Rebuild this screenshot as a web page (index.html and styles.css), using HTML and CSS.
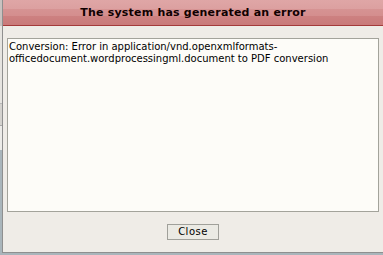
FILE: index.html
```html
<!DOCTYPE html>
<html>
<head>
<meta charset="utf-8">
<link rel="stylesheet" href="styles.css">
</head>
<body>
<div class="dialog">
  <div class="dialog-header">The system has generated an error</div>
  <div class="dialog-body">
    <div class="message">Conversion: Error in application/vnd.openxmlformats-officedocument.wordprocessingml.document to PDF conversion</div>
    <div class="actions">
      <button class="btn" type="button">Close</button>
    </div>
  </div>
</div>
</body>
</html>
```

FILE: styles.css
```css
html, body {
  margin: 0;
  padding: 0;
  width: 383px;
  height: 255px;
  overflow: hidden;
}
body {
  background:
    linear-gradient(to bottom,
      #c9c2c0 0, #c9c2c0 26px,
      #e6e4e0 26px, #e6e4e0 103px,
      #b8b8b8 103px, #b8b8b8 104px,
      #d4d2ce 104px, #d4d2ce 125px,
      #a8a8a8 125px, #a8a8a8 126px,
      #ecebe8 126px, #ecebe8 150px,
      #a9b5bb 150px, #a9b5bb 100%);
  font-family: "DejaVu Sans", Verdana, sans-serif;
}
.dialog {
  box-sizing: border-box;
  margin-left: 2px;
  width: 381px;
  height: 253px;
  background: #efece7;
  border-left: 1px solid #8f8f8f;
  border-bottom: 1px solid #8f8f8f;
  display: flex;
  flex-direction: column;
}
.dialog-header {
  height: 25px;
  border-bottom: 1px solid #a43a3a;
  background: linear-gradient(to bottom,
    #dfa6a6 0, #dca0a0 36%,
    #d69393 36%, #d48e8e 64%,
    #cd8181 64%, #c97a7a 100%);
  font-weight: bold;
  font-size: 11px;
  letter-spacing: 0.2px;
  line-height: 25px;
  color: #100000;
  text-align: center;
}
.dialog-body {
  padding: 12px 0 0 4px;
  display: flex;
  flex-direction: column;
  align-items: flex-start;
}
.message {
  box-sizing: border-box;
  width: 372px;
  height: 174px;
  background: #fdfcf8;
  border: 1px solid #a3a39b;
  padding: 2px 1px;
  font-size: 10px;
  line-height: 12px;
  color: #000;
}
.actions {
  width: 372px;
  display: flex;
  justify-content: center;
  padding-top: 12px;
}
.btn {
  box-sizing: border-box;
  width: 52px;
  height: 16px;
  margin: 0;
  padding: 0;
  background: #ebeae4;
  border: 1px solid #a0a09a;
  border-radius: 0;
  font-family: "DejaVu Sans", Verdana, sans-serif;
  font-size: 10px;
  letter-spacing: 0.5px;
  color: #000;
  line-height: 14px;
}
```
